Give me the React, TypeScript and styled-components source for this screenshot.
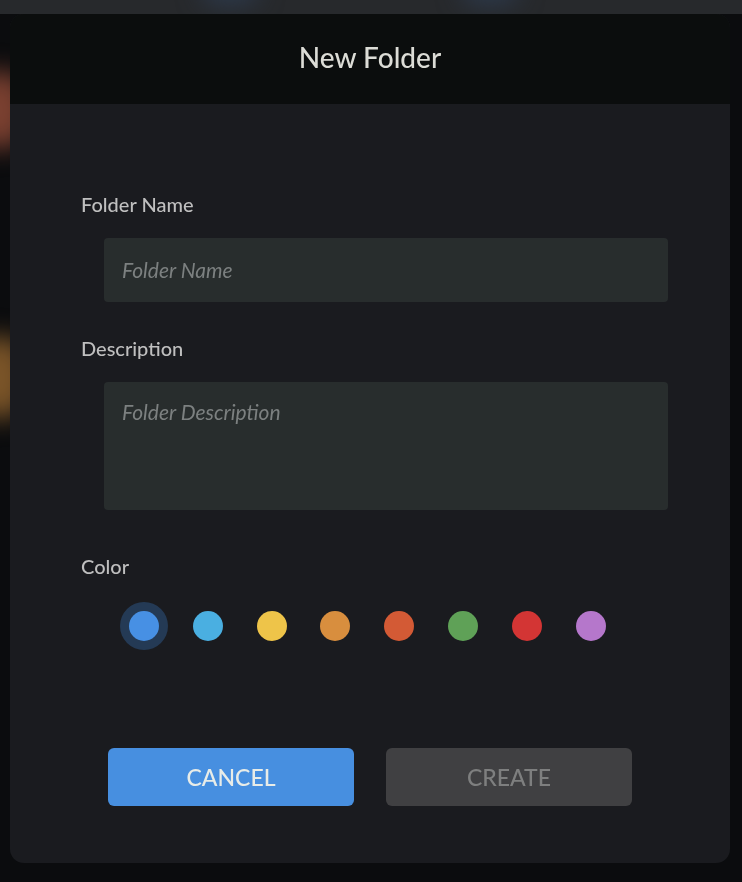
import { useState } from "react";

import styled, { createGlobalStyle } from "styled-components";

const COLORS = [
  "#4790e4",
  "#4aafe1",
  "#eec449",
  "#d88e3e",
  "#d35a35",
  "#5fa157",
  "#d33534",
  "#b577cb",
];

const GlobalStyle = createGlobalStyle`
  html, body {
    margin: 0;
    padding: 0;
    background: #0a0b0c;
  }
  body {
    font-family: Lato, "Open Sans", sans-serif;
    -webkit-font-smoothing: antialiased;
  }
  * { box-sizing: border-box; }
`;

export default function App() {
  const [selected, setSelected] = useState(0);
  const [name, setName] = useState("");
  const [description, setDescription] = useState("");

  return (
    <>
      <GlobalStyle />
      <Page>
        <Backdrop aria-hidden>
          <Blob $x={-30} $y={70} $w={60} $h={80} $color="#7a4030" />
          <Blob $x={-30} $y={335} $w={60} $h={85} $color="#7a5428" />
          <Blob $x={200} $y={-24} $w={60} $h={30} $color="#2d3a4c" />
          <Blob $x={460} $y={-24} $w={60} $h={30} $color="#2d3a4c" />
        </Backdrop>
        <Modal>
          <Header>
            <Title>New Folder</Title>
          </Header>
          <Body>
            <Field $top={88}>
              <Label>Folder Name</Label>
              <TextInput
                placeholder="Folder Name"
                value={name}
                onChange={(e) => setName(e.target.value)}
              />
            </Field>
            <Field $top={34}>
              <Label>Description</Label>
              <TextArea
                placeholder="Folder Description"
                value={description}
                onChange={(e) => setDescription(e.target.value)}
              />
            </Field>
            <Field $top={44}>
              <Label>Color</Label>
              <Swatches>
                {COLORS.map((color, i) => (
                  <Swatch
                    key={color}
                    type="button"
                    $color={color}
                    $active={i === selected}
                    onClick={() => setSelected(i)}
                  />
                ))}
              </Swatches>
            </Field>
          </Body>
          <Footer>
            <Button $variant="primary">CANCEL</Button>
            <Button $variant="disabled" disabled={!name}>
              CREATE
            </Button>
          </Footer>
        </Modal>
      </Page>
    </>
  );
}

const Page = styled.div`
  position: relative;
  width: 742px;
  height: 882px;
  padding: 14px 12px 0 10px;
  overflow: hidden;
  background: linear-gradient(#27292c 0, #27292c 14px, #0b0c0e 14px);
`;

const Backdrop = styled.div`
  position: absolute;
  inset: 0;
  filter: blur(12px);
`;

const Blob = styled.div<{
  $x: number;
  $y: number;
  $w: number;
  $h: number;
  $color: string;
}>`
  position: absolute;
  left: ${(p) => p.$x}px;
  top: ${(p) => p.$y}px;
  width: ${(p) => p.$w}px;
  height: ${(p) => p.$h}px;
  border-radius: 50%;
  background: ${(p) => p.$color};
`;

const Modal = styled.div`
  position: relative;
  width: 720px;
  height: 849px;
  display: flex;
  flex-direction: column;
  border-radius: 14px;
  overflow: hidden;
  background: #1a1b1f;
`;

const Header = styled.div`
  height: 90px;
  display: flex;
  justify-content: center;
  padding-top: 26px;
  background: #0b0d0d;
`;

const Title = styled.h1`
  margin: 0;
  font-size: 28px;
  line-height: 34px;
  font-weight: 500;
  color: #dcdcd6;
`;

const Body = styled.div`
  display: flex;
  flex-direction: column;
  padding: 0 62px 0 71px;
`;

const Field = styled.div<{ $top: number }>`
  display: flex;
  flex-direction: column;
  margin-top: ${(p) => p.$top}px;
`;

const Label = styled.label`
  font-size: 20px;
  line-height: 24px;
  font-weight: 500;
  color: #bfbfbf;
`;

const inputBase = `
  margin: 22px 0 0 23px;
  border: none;
  outline: none;
  border-radius: 4px;
  background: #282d2d;
  color: #dddddd;
  font-family: Lato, "Open Sans", sans-serif;
  font-size: 21px;
  padding: 0 18px 2px;
  &::placeholder {
    color: #7c8080;
    font-style: italic;
  }
`;

const TextInput = styled.input`
  ${inputBase}
  height: 64px;
`;

const TextArea = styled.textarea`
  ${inputBase}
  height: 128px;
  resize: none;
  padding-top: 17px;
  line-height: 26px;
`;

const Swatches = styled.div`
  display: flex;
  gap: 33.8px;
  margin: 33px 0 0 48px;
`;

const Swatch = styled.button<{ $color: string; $active: boolean }>`
  width: 30px;
  height: 30px;
  padding: 0;
  border: none;
  border-radius: 50%;
  cursor: pointer;
  background: ${(p) => p.$color};
  box-shadow: ${(p) => (p.$active ? "0 0 0 9px #243a55" : "none")};
`;

const Footer = styled.div`
  display: flex;
  justify-content: center;
  gap: 32px;
  margin-top: 107px;
`;

const Button = styled.button<{ $variant: "primary" | "disabled" }>`
  width: 246px;
  height: 58px;
  border: none;
  border-radius: 6px;
  font-family: Lato, "Open Sans", sans-serif;
  font-size: 23px;
  font-weight: 500;
  background: ${(p) => (p.$variant === "primary" ? "#478fe0" : "#404042")};
  color: ${(p) => (p.$variant === "primary" ? "#e8ece8" : "#7e7f7f")};
  cursor: ${(p) => (p.$variant === "primary" ? "pointer" : "default")};
`;
